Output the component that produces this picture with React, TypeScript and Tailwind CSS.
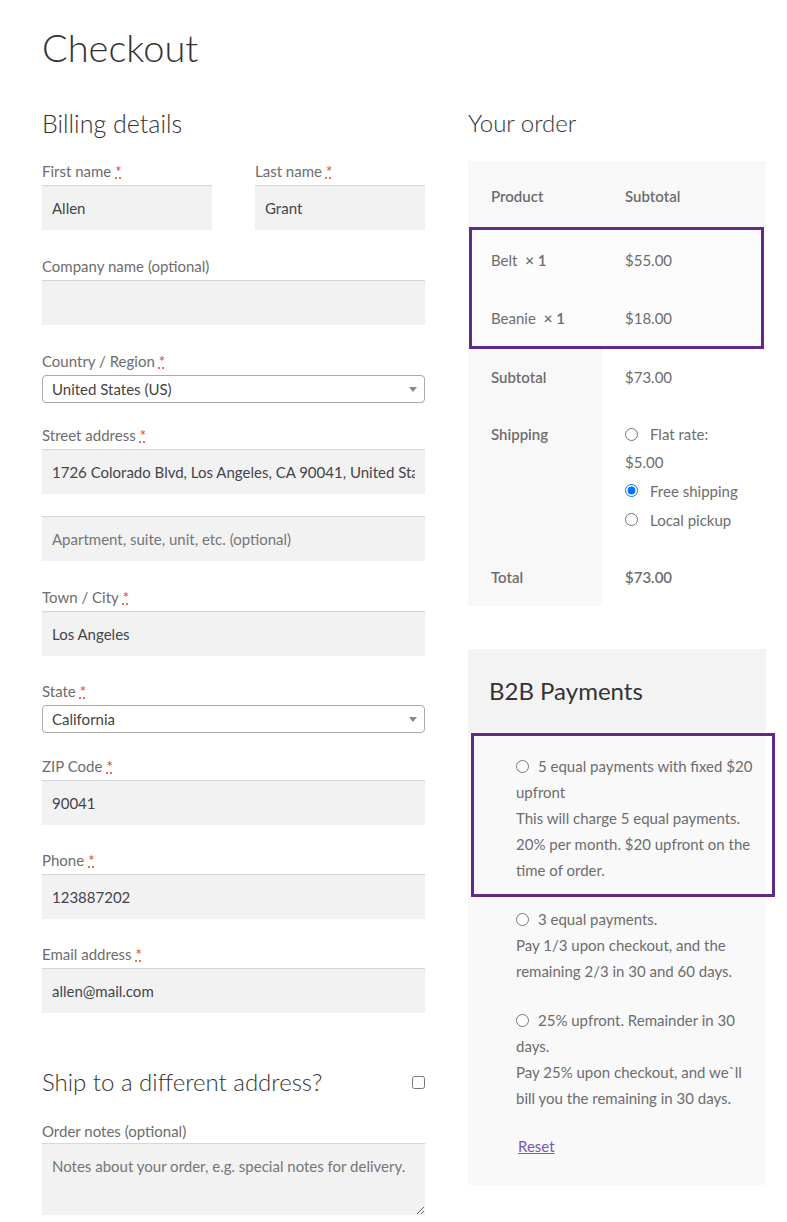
import React from "react";

type Field = {
  label: string;
  value?: string;
  placeholder?: string;
  required?: boolean;
  kind?: "input" | "select";
  gap: string;
};

const Req = () => (
  <abbr
    title="required"
    className="ml-[4px] text-[#e2401c] underline decoration-dotted decoration-[#e2401c]"
  >
    *
  </abbr>
);

const Label: React.FC<{ text: string; required?: boolean }> = ({ text, required }) => (
  <label className="block h-[27px] text-[15px] leading-[26px] text-[#6d6d6d]">
    {text}
    {required && <Req />}
  </label>
);

const TextInput: React.FC<{ value?: string; placeholder?: string }> = ({ value, placeholder }) => (
  <input
    readOnly
    value={value ?? ""}
    placeholder={placeholder}
    className="block h-[45px] w-full bg-[#f2f2f2] px-[10px] text-[15px] text-[#43454b] shadow-[inset_0_1px_1px_rgba(0,0,0,0.125)] outline-none placeholder:text-[#767676]"
  />
);

const FakeSelect: React.FC<{ value: string }> = ({ value }) => (
  <div className="flex h-[28px] w-full items-center justify-between rounded-[4px] border border-[#aaaaaa] bg-white pl-[9px] pr-[7px] text-[15px] text-[#444444]">
    <span>{value}</span>
    <svg width="8" height="5" viewBox="0 0 8 5" aria-hidden="true">
      <path d="M0 0h8L4 5z" fill="#888888" />
    </svg>
  </div>
);

const fields: Field[] = [
  { label: "Company name (optional)", gap: "mb-[23px]" },
  { label: "Country / Region", value: "United States (US)", required: true, kind: "select", gap: "mb-[19px]" },
  { label: "Street address", value: "1726 Colorado Blvd, Los Angeles, CA 90041, United States", required: true, gap: "mb-[22px]" },
];

const fields2: Field[] = [
  { label: "Town / City", value: "Los Angeles", required: true, gap: "mb-[22px]" },
  { label: "State", value: "California", required: true, kind: "select", gap: "mb-[20px]" },
  { label: "ZIP Code", value: "90041", required: true, gap: "mb-[22px]" },
  { label: "Phone", value: "123887202", required: true, gap: "mb-[22px]" },
  { label: "Email address", value: "allen@mail.com", required: true, gap: "mb-[56px]" },
];

const FieldRow: React.FC<{ f: Field }> = ({ f }) => (
  <div className={f.gap}>
    <Label text={f.label} required={f.required} />
    {f.kind === "select" ? <FakeSelect value={f.value ?? ""} /> : <TextInput value={f.value} />}
  </div>
);

const Radio: React.FC<{ checked?: boolean; name: string }> = ({ checked, name }) => (
  <input
    type="radio"
    name={name}
    defaultChecked={checked}
    className="m-0 h-[13px] w-[13px] shrink-0 align-middle"
  />
);

const payments = [
  {
    title: ["5 equal payments with fixed $20", "upfront"],
    desc: ["This will charge 5 equal payments.", "20% per month. $20 upfront on the", "time of order."],
  },
  {
    title: ["3 equal payments."],
    desc: ["Pay 1/3 upon checkout, and the", "remaining 2/3 in 30 and 60 days."],
  },
  {
    title: ["25% upfront. Remainder in 30", "days."],
    desc: ["Pay 25% upon checkout, and we`ll", "bill you the remaining in 30 days."],
  },
];

export default function App() {
  return (
    <div className="min-h-screen bg-white font-['Lato',sans-serif] text-[#6d6d6d]">
      <div className="pl-[42px] pr-[21px] pt-[22px]">
        <h1 className="h-[50px] text-[38px] font-light leading-[50px] text-[#333333]">Checkout</h1>

        <div className="mt-[38px] flex gap-[43px]">
          {/* Billing column */}
          <div className="w-[383px] shrink-0">
            <h3 className="h-[26px] text-[25px] font-light leading-[26px] text-[#333333]">Billing details</h3>

            <div className="mb-[23px] mt-[22px] flex gap-[43px]">
              <div className="w-[170px]">
                <Label text="First name" required />
                <TextInput value="Allen" />
              </div>
              <div className="w-[170px]">
                <Label text="Last name" required />
                <TextInput value="Grant" />
              </div>
            </div>

            {fields.map((f) => (
              <FieldRow key={f.label} f={f} />
            ))}

            <div className="mb-[23px]">
              <TextInput placeholder="Apartment, suite, unit, etc. (optional)" />
            </div>

            {fields2.map((f) => (
              <FieldRow key={f.label} f={f} />
            ))}

            <div className="flex h-[26px] items-center justify-between">
              <h3 className="text-[24px] font-light leading-[26px] text-[#333333]">Ship to a different address?</h3>
              <input type="checkbox" className="m-0 h-[13px] w-[13px]" />
            </div>

            <div className="mt-[23px]">
              <label className="block h-[25px] text-[15px] leading-[26px] text-[#6d6d6d]">Order notes (optional)</label>
              <textarea
                readOnly
                placeholder="Notes about your order, e.g. special notes for delivery."
                className="block h-[72px] w-full bg-[#f2f2f2] px-[10px] py-[10px] text-[15px] leading-[26px] text-[#43454b] shadow-[inset_0_1px_1px_rgba(0,0,0,0.125)] outline-none placeholder:text-[#767676]"
              />
            </div>
          </div>

          {/* Order column */}
          <div className="w-[298px] shrink-0">
            <h3 className="h-[26px] text-[24px] font-light leading-[26px] text-[#333333]">Your order</h3>

            <div className="relative mt-[25px]">
              <table className="w-full border-collapse text-[15px] leading-[26px] text-[#6d6d6d]">
                <thead>
                  <tr className="h-[70px] bg-[#f8f8f8]">
                    <th className="w-[134px] pl-[23px] text-left font-semibold">Product</th>
                    <th className="pl-[23px] text-left font-semibold">Subtotal</th>
                  </tr>
                </thead>
                <tbody>
                  <tr className="h-[58px] bg-[#fcfcfc]">
                    <td className="pl-[23px]">
                      Belt <strong className="ml-[4px] font-semibold">× 1</strong>
                    </td>
                    <td className="pl-[23px]">$55.00</td>
                  </tr>
                  <tr className="h-[58px] bg-[#fcfcfc]">
                    <td className="pl-[23px]">
                      Beanie <strong className="ml-[4px] font-semibold">× 1</strong>
                    </td>
                    <td className="pl-[23px]">$18.00</td>
                  </tr>
                </tbody>
                <tfoot>
                  <tr className="h-[59px]">
                    <th className="bg-[#f8f8f8] pl-[23px] text-left font-semibold">Subtotal</th>
                    <td className="bg-white pl-[23px]">$73.00</td>
                  </tr>
                  <tr className="h-[142px]">
                    <th className="bg-[#f8f8f8] pl-[23px] pt-[15px] text-left align-top font-semibold">Shipping</th>
                    <td className="bg-white pl-[23px] pt-[15px] align-top">
                      <ul className="flex flex-col">
                        <li className="leading-[27px]">
                          <span className="inline-flex items-center gap-[12px]">
                            <Radio name="ship" />
                            <span>Flat rate:</span>
                          </span>
                          <br />
                          $5.00
                        </li>
                        <li className="flex h-[29px] items-center gap-[12px]">
                          <Radio name="ship" checked />
                          <span>Free shipping</span>
                        </li>
                        <li className="flex h-[29px] items-center gap-[12px]">
                          <Radio name="ship" />
                          <span>Local pickup</span>
                        </li>
                      </ul>
                    </td>
                  </tr>
                  <tr className="h-[58px]">
                    <th className="bg-[#f8f8f8] pl-[23px] text-left font-semibold">Total</th>
                    <td className="bg-white pl-[23px] font-semibold">$73.00</td>
                  </tr>
                </tfoot>
              </table>
              {/* highlight overlay */}
              <div className="pointer-events-none absolute left-[1px] top-[66px] h-[122px] w-[295px] border-[3px] border-[#5f2a8c]" />
            </div>

            <div className="relative mt-[43px]">
              <div className="flex h-[83px] items-center bg-[#f3f3f3] pl-[21px]">
                <h2 className="text-[24px] leading-[30px] text-[#333333]">B2B Payments</h2>
              </div>
              <div className="bg-[#f9f9f9] pb-[26px] pl-[48px] pt-[21px] text-[15px] leading-[26px] text-[#6d6d6d]">
                <ul className="flex flex-col gap-[23px]">
                  {payments.map((p, i) => (
                    <li key={i}>
                      <div className="flex items-center gap-[9px]">
                        <Radio name="b2b" />
                        <span className="whitespace-nowrap">{p.title[0]}</span>
                      </div>
                      {p.title.slice(1).map((t) => (
                        <div key={t} className="whitespace-nowrap">
                          {t}
                        </div>
                      ))}
                      {p.desc.map((d) => (
                        <div key={d} className="whitespace-nowrap">
                          {d}
                        </div>
                      ))}
                    </li>
                  ))}
                </ul>
                <a href="#" className="ml-[2px] mt-[22px] inline-block text-[#7f54b3] underline">
                  Reset
                </a>
              </div>
              {/* highlight overlay */}
              <div className="pointer-events-none absolute left-[3px] top-[84px] h-[164px] w-[304px] border-[3px] border-[#5f2a8c]" />
            </div>
          </div>
        </div>
      </div>
    </div>
  );
}
